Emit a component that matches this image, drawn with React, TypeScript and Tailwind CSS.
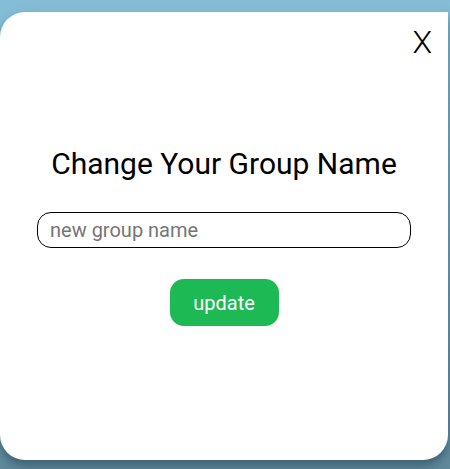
export default function App() {
  return (
    <div className="flex h-[469px] w-[450px] flex-col bg-gradient-to-b from-[#85bdd7] to-[#5f8a9c] pt-[12px] font-['Roboto',sans-serif]">
      <div className="flex h-[448px] w-[448px] flex-col items-center rounded-[25px] rounded-tr-none bg-white shadow-[0_6px_10px_rgba(30,60,75,0.5)]">
        <div className="flex w-full justify-end pr-[16px] pt-[14px]">
          <button className="text-[32px] font-light leading-none text-black">X</button>
        </div>
        <h2 className="mt-[91px] text-[30px] leading-none text-black">Change Your Group Name</h2>
        <input
          type="text"
          placeholder="new group name"
          className="mt-[33px] h-[36px] w-[374px] rounded-[14px] border border-black px-[12px] text-[20px] text-black outline-none placeholder:text-[#757575]"
        />
        <button className="mt-[31px] h-[47px] w-[109px] rounded-[14px] bg-[#1db954] text-[20px] text-white">update</button>
      </div>
    </div>
  );
}
